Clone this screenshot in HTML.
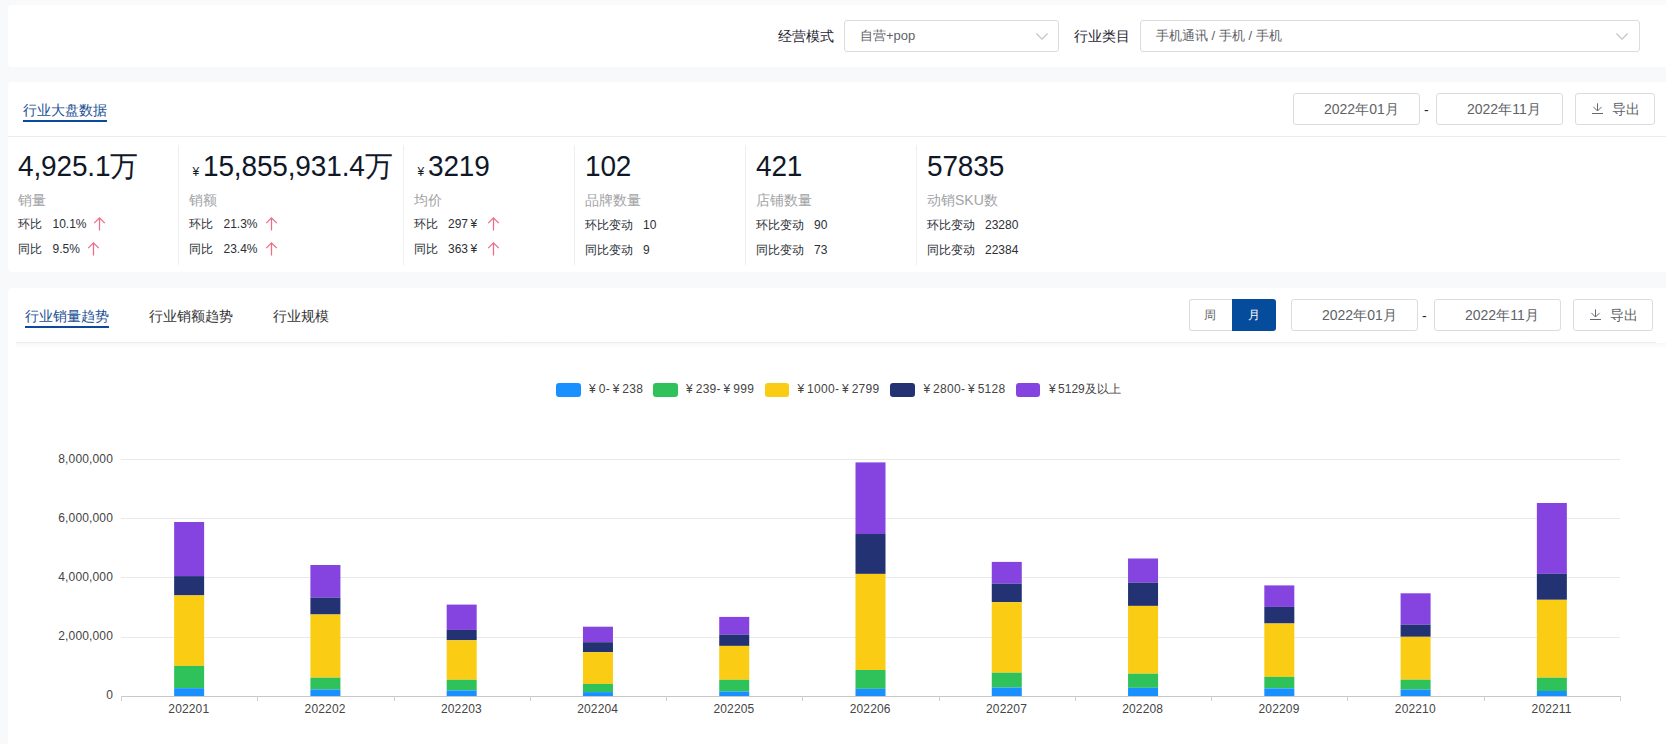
<!DOCTYPE html>
<html lang="zh"><head><meta charset="utf-8"><title>dashboard</title>
<style>
*{box-sizing:border-box}
html,body{margin:0;padding:0}
body{width:1666px;height:744px;overflow:hidden;position:relative;background:#f8f9fb;
 font-family:"Liberation Sans",sans-serif;color:#333;font-size:14px}
.abs{position:absolute;white-space:nowrap}
.panel{position:absolute;background:#fff}
.lbl{position:absolute;font-size:14px;line-height:20px;color:#1f2430;white-space:nowrap}
.sel{position:absolute;height:32px;border:1px solid #dbdcdf;border-radius:3px;background:#fff;
 font-size:13px;line-height:30px;color:#606266;padding-left:15px;white-space:nowrap}
.inp{position:absolute;height:32px;border:1px solid #dbdcdf;border-radius:3px;background:#fff}
.t14{position:absolute;font-size:14px;line-height:20px;color:#606266;white-space:nowrap}
.tab{position:absolute;font-size:14px;line-height:20px;color:#333;white-space:nowrap}
.tab.on{color:#1a4f94}
.ul{position:absolute;height:2px;background:#0b4a9b}
.hr{position:absolute;height:1px;background:#ececed}
.vr{position:absolute;width:1px;background:#efeff0}
.big{position:absolute;font-size:28px;line-height:32px;color:#101828;white-space:nowrap;letter-spacing:-.15px;transform-origin:0 26px;transform:scaleY(1.04)}
.yen{position:absolute;font-size:12px;line-height:14px;color:#101828}
.cap{position:absolute;font-size:14px;line-height:20px;color:#a2a3a5;white-space:nowrap}
.row{position:absolute;font-size:12px;line-height:16px;color:#2b2f36;white-space:nowrap}
.leg{position:absolute;font-size:12px;line-height:14px;color:#444;white-space:nowrap;letter-spacing:.3px}
.sw{position:absolute;width:24.6px;height:14px;border-radius:3px}
svg{position:absolute;overflow:visible}
</style></head>
<body>
<div class="abs" style="left:16px;top:0;width:1650px;height:5px;background:#fafafa"></div>
<div class="panel" style="left:8px;top:5px;width:1670px;height:62px;border-radius:4px"></div>
<div class="lbl" style="left:778px;top:26px">经营模式</div>
<div class="sel" style="left:844px;top:20px;width:215px">自营+pop</div>
<div class="lbl" style="left:1074px;top:26px">行业类目</div>
<div class="sel" style="left:1140px;top:20px;width:500px">手机通讯 / 手机 / 手机</div>
<svg style="left:1035.5px;top:32.5px" width="12" height="8" viewBox="0 0 12 8"><path d="M0.4 0.5 L6 6.1 L11.6 0.5" fill="none" stroke="#c3c5c9" stroke-width="1.2"/></svg>
<svg style="left:1615.5px;top:32.5px" width="12" height="8" viewBox="0 0 12 8"><path d="M0.4 0.5 L6 6.1 L11.6 0.5" fill="none" stroke="#c3c5c9" stroke-width="1.2"/></svg>
<div class="panel" style="left:8px;top:82px;width:1670px;height:190px;border-radius:4px"></div>
<div class="tab on" style="left:23px;top:100px">行业大盘数据</div>
<div class="ul" style="left:23px;top:120px;width:84px"></div>
<div class="hr" style="left:8px;top:136px;width:1660px"></div>
<div class="inp" style="left:1293px;top:93px;width:127px"></div>
<div class="inp" style="left:1436px;top:93px;width:127px"></div>
<div class="inp" style="left:1575px;top:93px;width:80px"></div>
<div class="t14" style="left:1324px;top:99px">2022年01月</div>
<div class="t14" style="left:1467px;top:99px">2022年11月</div>
<div class="t14" style="left:1424px;top:100px;color:#2a2c30">-</div>
<svg style="left:1592px;top:103px" width="11" height="12" viewBox="0 0 11 12"><path d="M5.5 0.3 V7.8 M1.4 3.9 L5.5 8 L9.6 3.9 M0 10.5 H11" fill="none" stroke="#666a70" stroke-width="1"/></svg>
<div class="t14" style="left:1611.5px;top:99px">导出</div>
<div class="vr" style="left:178px;top:145px;height:120px"></div>
<div class="vr" style="left:403px;top:145px;height:120px"></div>
<div class="vr" style="left:574px;top:145px;height:120px"></div>
<div class="vr" style="left:745px;top:145px;height:120px"></div>
<div class="vr" style="left:916px;top:145px;height:120px"></div>
<div class="big" style="left:18px;top:151px">4,925.1万</div>
<div class="cap" style="left:18px;top:190px">销量</div>
<div class="row" style="left:18px;top:216px">环比</div>
<div class="row" style="left:18px;top:241px">同比</div>
<div class="row" style="left:52.5px;top:216px">10.1%</div>
<div class="row" style="left:52.5px;top:241px">9.5%</div>
<svg style="left:93px;top:217px" width="13" height="14" viewBox="0 0 13 14"><path d="M6.5 13.6 V0.9 M1.2 6.1 L6.5 0.8 L11.8 6.1" fill="none" stroke="#ee6c84" stroke-width="1.25"/></svg>
<svg style="left:87px;top:242px" width="13" height="14" viewBox="0 0 13 14"><path d="M6.5 13.6 V0.9 M1.2 6.1 L6.5 0.8 L11.8 6.1" fill="none" stroke="#ee6c84" stroke-width="1.25"/></svg>
<div class="yen" style="left:192.5px;top:165px">¥</div>
<div class="big" style="left:203px;top:151px">15,855,931.4万</div>
<div class="cap" style="left:189px;top:190px">销额</div>
<div class="row" style="left:189px;top:216px">环比</div>
<div class="row" style="left:189px;top:241px">同比</div>
<div class="row" style="left:223.5px;top:216px">21.3%</div>
<div class="row" style="left:223.5px;top:241px">23.4%</div>
<svg style="left:264.5px;top:217px" width="13" height="14" viewBox="0 0 13 14"><path d="M6.5 13.6 V0.9 M1.2 6.1 L6.5 0.8 L11.8 6.1" fill="none" stroke="#ee6c84" stroke-width="1.25"/></svg>
<svg style="left:264.5px;top:242px" width="13" height="14" viewBox="0 0 13 14"><path d="M6.5 13.6 V0.9 M1.2 6.1 L6.5 0.8 L11.8 6.1" fill="none" stroke="#ee6c84" stroke-width="1.25"/></svg>
<div class="yen" style="left:417.5px;top:165px">¥</div>
<div class="big" style="left:428px;top:151px">3219</div>
<div class="cap" style="left:414px;top:190px">均价</div>
<div class="row" style="left:414px;top:216px">环比</div>
<div class="row" style="left:414px;top:241px">同比</div>
<div class="row" style="left:448px;top:216px">297&#8201;¥</div>
<div class="row" style="left:448px;top:241px">363&#8201;¥</div>
<svg style="left:486.5px;top:217px" width="13" height="14" viewBox="0 0 13 14"><path d="M6.5 13.6 V0.9 M1.2 6.1 L6.5 0.8 L11.8 6.1" fill="none" stroke="#ee6c84" stroke-width="1.25"/></svg>
<svg style="left:486.5px;top:242px" width="13" height="14" viewBox="0 0 13 14"><path d="M6.5 13.6 V0.9 M1.2 6.1 L6.5 0.8 L11.8 6.1" fill="none" stroke="#ee6c84" stroke-width="1.25"/></svg>
<div class="big" style="left:585px;top:151px">102</div>
<div class="cap" style="left:585px;top:190px">品牌数量</div>
<div class="row" style="left:585px;top:217px">环比变动</div>
<div class="row" style="left:585px;top:242px">同比变动</div>
<div class="row" style="left:643px;top:217px">10</div>
<div class="row" style="left:643px;top:242px">9</div>
<div class="big" style="left:756px;top:151px">421</div>
<div class="cap" style="left:756px;top:190px">店铺数量</div>
<div class="row" style="left:756px;top:217px">环比变动</div>
<div class="row" style="left:756px;top:242px">同比变动</div>
<div class="row" style="left:814px;top:217px">90</div>
<div class="row" style="left:814px;top:242px">73</div>
<div class="big" style="left:927px;top:151px">57835</div>
<div class="cap" style="left:927px;top:190px">动销SKU数</div>
<div class="row" style="left:927px;top:217px">环比变动</div>
<div class="row" style="left:927px;top:242px">同比变动</div>
<div class="row" style="left:985px;top:217px">23280</div>
<div class="row" style="left:985px;top:242px">22384</div>
<div class="panel" style="left:8px;top:288px;width:1670px;height:480px;border-radius:4px 4px 0 0"></div>
<div class="hr" style="left:16px;top:342px;width:1640px;background:#ebebec"></div>
<div class="abs" style="left:16px;top:343px;width:1650px;height:5px;background:linear-gradient(#f8f8f8,#fbfbfb 70%,#fefefe)"></div>
<div class="tab on" style="left:25px;top:306px">行业销量趋势</div>
<div class="ul" style="left:25px;top:325.5px;width:84px"></div>
<div class="tab" style="left:149px;top:306px">行业销额趋势</div>
<div class="tab" style="left:273px;top:306px">行业规模</div>
<div class="abs" style="left:1189px;top:299px;width:44px;height:32px;border:1px solid #dbdcdf;border-right:0;border-radius:3px 0 0 3px;background:#fff"></div>
<div class="abs" style="left:1232px;top:299px;width:44px;height:32px;border-radius:0 3px 3px 0;background:#064c9c"></div>
<div class="abs" style="left:1204px;top:307px;font-size:12px;line-height:16px;color:#606266">周</div>
<div class="abs" style="left:1247.5px;top:307px;font-size:12px;line-height:16px;color:#fff">月</div>
<div class="inp" style="left:1291px;top:299px;width:127px"></div>
<div class="inp" style="left:1434px;top:299px;width:127px"></div>
<div class="inp" style="left:1573px;top:299px;width:80px"></div>
<div class="t14" style="left:1322px;top:305px">2022年01月</div>
<div class="t14" style="left:1465px;top:305px">2022年11月</div>
<div class="t14" style="left:1422px;top:306px;color:#2a2c30">-</div>
<svg style="left:1590px;top:309px" width="11" height="12" viewBox="0 0 11 12"><path d="M5.5 0.3 V7.8 M1.4 3.9 L5.5 8 L9.6 3.9 M0 10.5 H11" fill="none" stroke="#666a70" stroke-width="1"/></svg>
<div class="t14" style="left:1610px;top:305px">导出</div>
<div class="sw" style="left:556.1px;top:383px;background:#1890ff"></div>
<div class="leg" style="left:589px;top:382px">¥&#8201;0-&#8201;¥&#8201;238</div>
<div class="sw" style="left:653px;top:383px;background:#2fc25b"></div>
<div class="leg" style="left:686px;top:382px">¥&#8201;239-&#8201;¥&#8201;999</div>
<div class="sw" style="left:764.7px;top:383px;background:#facc14"></div>
<div class="leg" style="left:797.4px;top:382px">¥&#8201;1000-&#8201;¥&#8201;2799</div>
<div class="sw" style="left:890px;top:383px;background:#223273"></div>
<div class="leg" style="left:923.4px;top:382px">¥&#8201;2800-&#8201;¥&#8201;5128</div>
<div class="sw" style="left:1015.8px;top:383px;background:#8543e0"></div>
<div class="leg" style="left:1049px;top:382px"><span style="letter-spacing:0">¥&#8201;5129及以上</span></div>
<svg style="left:0;top:0" width="1666" height="744" viewBox="0 0 1666 744"><path d="M121 459.5 H1620" stroke="#e9e9e9" stroke-width="1" fill="none"/><path d="M121 518.5 H1620" stroke="#e9e9e9" stroke-width="1" fill="none"/><path d="M121 577.5 H1620" stroke="#e9e9e9" stroke-width="1" fill="none"/><path d="M121 637.5 H1620" stroke="#e9e9e9" stroke-width="1" fill="none"/><rect x="174.14" y="522.00" width="30" height="54.10" fill="#8543e0"/><rect x="174.14" y="576.10" width="30" height="19.30" fill="#223273"/><rect x="174.14" y="595.40" width="30" height="70.50" fill="#facc14"/><rect x="174.14" y="665.90" width="30" height="22.30" fill="#2fc25b"/><rect x="174.14" y="688.20" width="30" height="7.80" fill="#1890ff"/><rect x="310.41" y="565.00" width="30" height="32.60" fill="#8543e0"/><rect x="310.41" y="597.60" width="30" height="16.90" fill="#223273"/><rect x="310.41" y="614.50" width="30" height="63.20" fill="#facc14"/><rect x="310.41" y="677.70" width="30" height="11.80" fill="#2fc25b"/><rect x="310.41" y="689.50" width="30" height="6.50" fill="#1890ff"/><rect x="446.68" y="604.60" width="30" height="25.30" fill="#8543e0"/><rect x="446.68" y="629.90" width="30" height="10.40" fill="#223273"/><rect x="446.68" y="640.30" width="30" height="39.50" fill="#facc14"/><rect x="446.68" y="679.80" width="30" height="10.60" fill="#2fc25b"/><rect x="446.68" y="690.40" width="30" height="5.60" fill="#1890ff"/><rect x="582.95" y="626.70" width="30" height="15.50" fill="#8543e0"/><rect x="582.95" y="642.20" width="30" height="10.00" fill="#223273"/><rect x="582.95" y="652.20" width="30" height="31.70" fill="#facc14"/><rect x="582.95" y="683.90" width="30" height="8.20" fill="#2fc25b"/><rect x="582.95" y="692.10" width="30" height="3.90" fill="#1890ff"/><rect x="719.23" y="616.90" width="30" height="17.80" fill="#8543e0"/><rect x="719.23" y="634.70" width="30" height="11.20" fill="#223273"/><rect x="719.23" y="645.90" width="30" height="33.90" fill="#facc14"/><rect x="719.23" y="679.80" width="30" height="11.70" fill="#2fc25b"/><rect x="719.23" y="691.50" width="30" height="4.50" fill="#1890ff"/><rect x="855.50" y="462.40" width="30" height="71.60" fill="#8543e0"/><rect x="855.50" y="534.00" width="30" height="39.90" fill="#223273"/><rect x="855.50" y="573.90" width="30" height="96.10" fill="#facc14"/><rect x="855.50" y="670.00" width="30" height="18.80" fill="#2fc25b"/><rect x="855.50" y="688.80" width="30" height="7.20" fill="#1890ff"/><rect x="991.77" y="561.90" width="30" height="21.80" fill="#8543e0"/><rect x="991.77" y="583.70" width="30" height="18.50" fill="#223273"/><rect x="991.77" y="602.20" width="30" height="70.50" fill="#facc14"/><rect x="991.77" y="672.70" width="30" height="14.80" fill="#2fc25b"/><rect x="991.77" y="687.50" width="30" height="8.50" fill="#1890ff"/><rect x="1128.05" y="558.50" width="30" height="24.20" fill="#8543e0"/><rect x="1128.05" y="582.70" width="30" height="23.20" fill="#223273"/><rect x="1128.05" y="605.90" width="30" height="67.80" fill="#facc14"/><rect x="1128.05" y="673.70" width="30" height="14.10" fill="#2fc25b"/><rect x="1128.05" y="687.80" width="30" height="8.20" fill="#1890ff"/><rect x="1264.32" y="585.40" width="30" height="21.50" fill="#8543e0"/><rect x="1264.32" y="606.90" width="30" height="16.60" fill="#223273"/><rect x="1264.32" y="623.50" width="30" height="53.40" fill="#facc14"/><rect x="1264.32" y="676.90" width="30" height="11.50" fill="#2fc25b"/><rect x="1264.32" y="688.40" width="30" height="7.60" fill="#1890ff"/><rect x="1400.59" y="593.30" width="30" height="31.40" fill="#8543e0"/><rect x="1400.59" y="624.70" width="30" height="12.10" fill="#223273"/><rect x="1400.59" y="636.80" width="30" height="42.90" fill="#facc14"/><rect x="1400.59" y="679.70" width="30" height="9.90" fill="#2fc25b"/><rect x="1400.59" y="689.60" width="30" height="6.40" fill="#1890ff"/><rect x="1536.86" y="503.00" width="30" height="70.80" fill="#8543e0"/><rect x="1536.86" y="573.80" width="30" height="26.00" fill="#223273"/><rect x="1536.86" y="599.80" width="30" height="77.90" fill="#facc14"/><rect x="1536.86" y="677.70" width="30" height="13.30" fill="#2fc25b"/><rect x="1536.86" y="691.00" width="30" height="5.00" fill="#1890ff"/><path d="M121 696.5 H1620.5" stroke="#c8c8c8" stroke-width="1" fill="none"/><path d="M121.5 696 V701" stroke="#cfcfcf" stroke-width="1" fill="none"/><path d="M257.5 696 V701" stroke="#cfcfcf" stroke-width="1" fill="none"/><path d="M394.5 696 V701" stroke="#cfcfcf" stroke-width="1" fill="none"/><path d="M530.5 696 V701" stroke="#cfcfcf" stroke-width="1" fill="none"/><path d="M666.5 696 V701" stroke="#cfcfcf" stroke-width="1" fill="none"/><path d="M802.5 696 V701" stroke="#cfcfcf" stroke-width="1" fill="none"/><path d="M939.5 696 V701" stroke="#cfcfcf" stroke-width="1" fill="none"/><path d="M1075.5 696 V701" stroke="#cfcfcf" stroke-width="1" fill="none"/><path d="M1211.5 696 V701" stroke="#cfcfcf" stroke-width="1" fill="none"/><path d="M1347.5 696 V701" stroke="#cfcfcf" stroke-width="1" fill="none"/><path d="M1484.5 696 V701" stroke="#cfcfcf" stroke-width="1" fill="none"/><path d="M1620.5 696 V701" stroke="#cfcfcf" stroke-width="1" fill="none"/><text x="113" y="462.8" text-anchor="end" font-size="12" letter-spacing="0.15" fill="#444">8,000,000</text><text x="113" y="521.8" text-anchor="end" font-size="12" letter-spacing="0.15" fill="#444">6,000,000</text><text x="113" y="580.8" text-anchor="end" font-size="12" letter-spacing="0.15" fill="#444">4,000,000</text><text x="113" y="640.3" text-anchor="end" font-size="12" letter-spacing="0.15" fill="#444">2,000,000</text><text x="113" y="699.3" text-anchor="end" font-size="12" letter-spacing="0.15" fill="#444">0</text><text x="188.8" y="713.3" text-anchor="middle" font-size="12" letter-spacing="0.15" fill="#444">202201</text><text x="325.1" y="713.3" text-anchor="middle" font-size="12" letter-spacing="0.15" fill="#444">202202</text><text x="461.4" y="713.3" text-anchor="middle" font-size="12" letter-spacing="0.15" fill="#444">202203</text><text x="597.7" y="713.3" text-anchor="middle" font-size="12" letter-spacing="0.15" fill="#444">202204</text><text x="733.9" y="713.3" text-anchor="middle" font-size="12" letter-spacing="0.15" fill="#444">202205</text><text x="870.2" y="713.3" text-anchor="middle" font-size="12" letter-spacing="0.15" fill="#444">202206</text><text x="1006.5" y="713.3" text-anchor="middle" font-size="12" letter-spacing="0.15" fill="#444">202207</text><text x="1142.7" y="713.3" text-anchor="middle" font-size="12" letter-spacing="0.15" fill="#444">202208</text><text x="1279.0" y="713.3" text-anchor="middle" font-size="12" letter-spacing="0.15" fill="#444">202209</text><text x="1415.3" y="713.3" text-anchor="middle" font-size="12" letter-spacing="0.15" fill="#444">202210</text><text x="1551.6" y="713.3" text-anchor="middle" font-size="12" letter-spacing="0.15" fill="#444">202211</text></svg>
</body></html>
